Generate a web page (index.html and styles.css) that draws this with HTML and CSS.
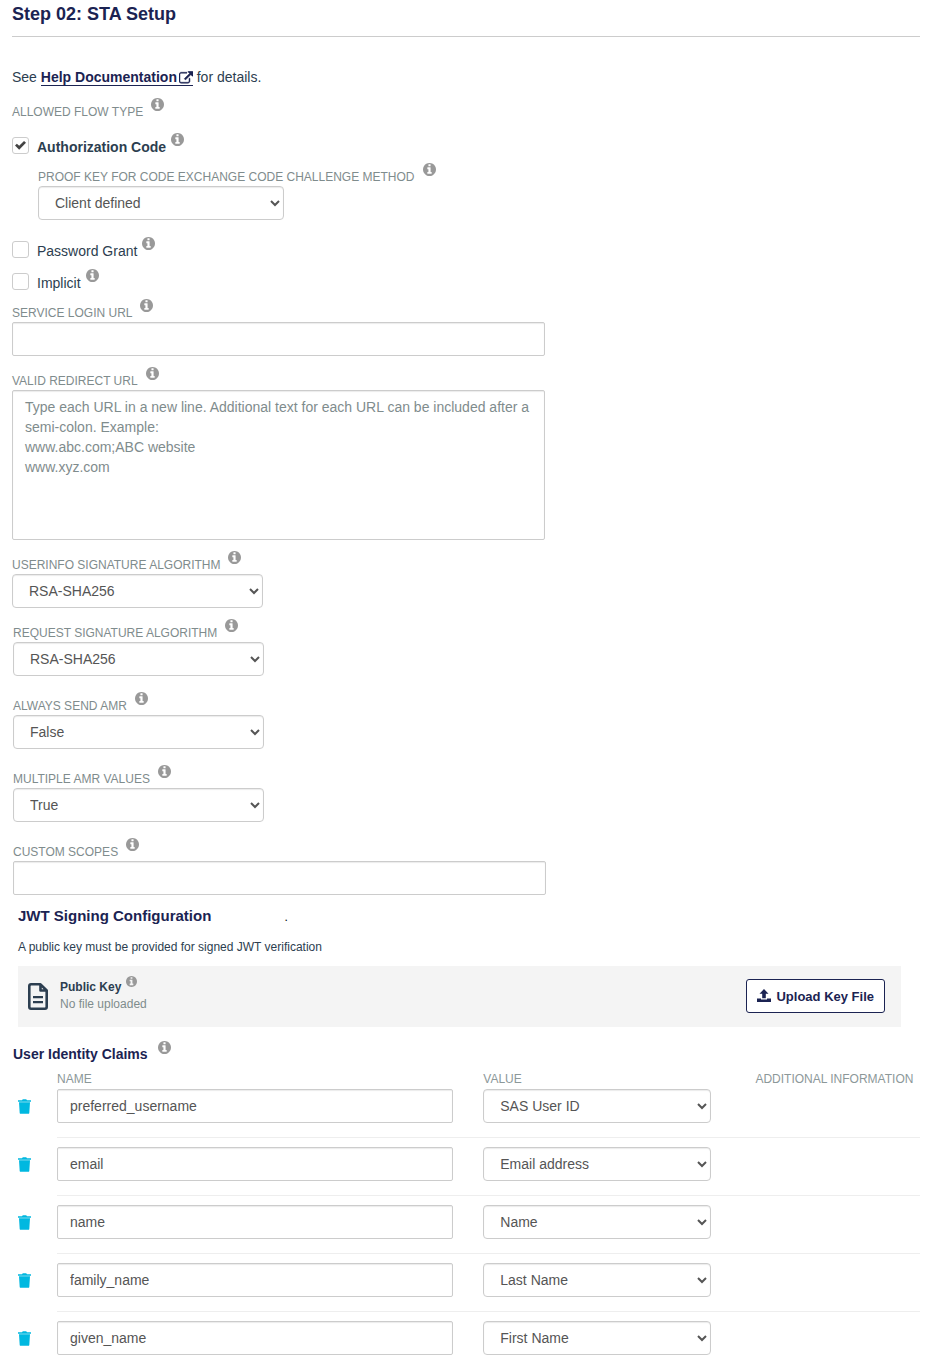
FILE: index.html
```html
<!DOCTYPE html>
<html lang="en">
<head>
    <meta charset="UTF-8">
    <meta name="viewport" content="width=device-width, initial-scale=1.0">
    <title>STA Setup</title>
    <link rel="stylesheet" href="styles.css">
</head>
<body>
    <svg class="sprite" aria-hidden="true">
        <symbol id="icon-info" viewBox="0 128 1536 1536">
            <path fill-rule="evenodd" d="M1024 1376v-160q0-14-9-23t-23-9h-96v-512q0-14-9-23t-23-9h-320q-14 0-23 9t-9 23v160q0 14 9 23t23 9h96v320h-96q-14 0-23 9t-9 23v160q0 14 9 23t23 9h448q14 0 23-9t9-23zM896 480v-160q0-14-9-23t-23-9h-192q-14 0-23 9t-9 23v160q0 14 9 23t23 9h192q14 0 23-9t9-23zM1536 896q0-209-103-385.5t-279.5-279.5t-385.5-103t-385.5 103t-279.5 279.5t-103 385.5t103 385.5t279.5 279.5t385.5 103t385.5-103t279.5-279.5t103-385.5z"/>
        </symbol>
        <symbol id="icon-trash" viewBox="0 0 13 15">
            <path d="M0 1.2h4L4.8.3h3.4l.8.9h4v1.5H0zM1 3.2h11l-.7 10.7q-.1.9-1 .9H2.7q-.9 0-1-.9z"/>
        </symbol>
    </svg>

    <form class="setup">
        <h1>Step 02: STA Setup</h1>
        <p class="help">See <a href="#">Help Documentation <svg class="external" viewBox="0 0 1792 1600" aria-hidden="true"><path d="M1408 928v320q0 119-84.5 203.5t-203.5 84.5h-832q-119 0-203.5-84.5t-84.5-203.5v-832q0-119 84.5-203.5t203.5-84.5h704q14 0 23 9t9 23v64q0 14-9 23t-23 9h-704q-66 0-113 47t-47 113v832q0 66 47 113t113 47h832q66 0 113-47t47-113v-320q0-14 9-23t23-9h64q14 0 23 9t9 23zm384-864v512q0 26-19 45t-45 19-45-19l-176-176-652 652q-10 10-23 10t-23-10l-114-114q-10-10-10-23t10-23l652-652-176-176q-19-19-19-45t19-45 45-19h512q26 0 45 19t19 45z"/></svg></a> for details.</p>

        <fieldset class="flows">
            <legend class="label">ALLOWED FLOW TYPE <svg class="info"><use href="#icon-info"/></svg></legend>
            <div class="check">
                <input type="checkbox" id="flow_code" checked>
                <label for="flow_code"><b>Authorization Code</b></label>
                <svg class="info"><use href="#icon-info"/></svg>
            </div>
            <div class="nested">
                <label class="label" for="pkce">PROOF KEY FOR CODE EXCHANGE CODE CHALLENGE METHOD <svg class="info"><use href="#icon-info"/></svg></label>
                <select class="control" id="pkce">
                    <option>Client defined</option>
                </select>
            </div>
            <div class="check">
                <input type="checkbox" id="flow_password">
                <label for="flow_password">Password Grant</label>
                <svg class="info"><use href="#icon-info"/></svg>
            </div>
            <div class="check">
                <input type="checkbox" id="flow_implicit">
                <label for="flow_implicit">Implicit</label>
                <svg class="info"><use href="#icon-info"/></svg>
            </div>
        </fieldset>

        <div class="urls">
            <div class="field">
                <label class="label" for="login_url">SERVICE LOGIN URL <svg class="info"><use href="#icon-info"/></svg></label>
                <input class="control" type="text" id="login_url">
            </div>
            <div class="field">
                <label class="label" for="redirect_url">VALID REDIRECT URL <svg class="info"><use href="#icon-info"/></svg></label>
                <textarea class="control" id="redirect_url" placeholder="Type each URL in a new line. Additional text for each URL can be included after a semi-colon. Example:&#10;www.abc.com;ABC website&#10;www.xyz.com"></textarea>
            </div>
            <div class="field">
                <label class="label" for="userinfo_alg">USERINFO SIGNATURE ALGORITHM <svg class="info"><use href="#icon-info"/></svg></label>
                <select class="control" id="userinfo_alg">
                    <option>RSA-SHA256</option>
                </select>
            </div>
        </div>

        <div class="options">
            <div class="field">
                <label class="label" for="request_alg">REQUEST SIGNATURE ALGORITHM <svg class="info"><use href="#icon-info"/></svg></label>
                <select class="control" id="request_alg">
                    <option>RSA-SHA256</option>
                </select>
            </div>
            <div class="field">
                <label class="label" for="send_amr">ALWAYS SEND AMR <svg class="info"><use href="#icon-info"/></svg></label>
                <select class="control" id="send_amr">
                    <option>False</option>
                    <option>True</option>
                </select>
            </div>
            <div class="field">
                <label class="label" for="multi_amr">MULTIPLE AMR VALUES <svg class="info"><use href="#icon-info"/></svg></label>
                <select class="control" id="multi_amr">
                    <option>True</option>
                    <option>False</option>
                </select>
            </div>
            <div class="field">
                <label class="label" for="scopes">CUSTOM SCOPES <svg class="info"><use href="#icon-info"/></svg></label>
                <input class="control" type="text" id="scopes">
            </div>
        </div>

        <section class="jwt">
            <h2>JWT Signing Configuration <span class="dot">.</span></h2>
            <p>A public key must be provided for signed JWT verification</p>
            <div class="key-panel">
                <svg class="file" viewBox="0 0 20 27" aria-hidden="true">
                    <path fill="none" stroke="currentColor" stroke-width="2.6" stroke-linejoin="round" d="M3 1.3h9.5l6.2 6.2V24q0 1.7-1.7 1.7H3q-1.7 0-1.7-1.7V3Q1.3 1.3 3 1.3zM12.5 1.3V7.5h6.2"/>
                    <path d="M5 13h10v2.300H5zM5 18h10v2.300H5z" fill="currentColor"/>
                </svg>
                <div class="key-text">
                    <div class="key-name">Public Key <svg class="info"><use href="#icon-info"/></svg></div>
                    <div class="key-status">No file uploaded</div>
                </div>
                <button type="button" class="upload">
                    <svg viewBox="0 0 14 14" aria-hidden="true"><path d="M7 0l4.500 4.700H8.800v4.600H5.200V4.700H2.500zM0 9.500h4v1h6v-1h4V13H0z"/></svg>
                    Upload Key File
                </button>
            </div>
        </section>

        <section class="claims">
            <h3>User Identity Claims <svg class="info"><use href="#icon-info"/></svg></h3>
            <table>
                <thead>
                    <tr>
                        <td class="col-delete"></td>
                        <th class="col-name" id="th_name">NAME</th>
                        <th class="col-value" id="th_value">VALUE</th>
                        <th class="col-extra">ADDITIONAL INFORMATION</th>
                    </tr>
                </thead>
                <tbody>
                    <tr>
                        <td><button type="button" class="delete" aria-label="Delete"><svg><use href="#icon-trash"/></svg></button></td>
                        <td><input class="control" type="text" aria-labelledby="th_name" value="preferred_username"></td>
                        <td><select class="control" aria-labelledby="th_value"><option>SAS User ID</option></select></td>
                        <td></td>
                    </tr>
                    <tr>
                        <td><button type="button" class="delete" aria-label="Delete"><svg><use href="#icon-trash"/></svg></button></td>
                        <td><input class="control" type="text" aria-labelledby="th_name" value="email"></td>
                        <td><select class="control" aria-labelledby="th_value"><option>Email address</option></select></td>
                        <td></td>
                    </tr>
                    <tr>
                        <td><button type="button" class="delete" aria-label="Delete"><svg><use href="#icon-trash"/></svg></button></td>
                        <td><input class="control" type="text" aria-labelledby="th_name" value="name"></td>
                        <td><select class="control" aria-labelledby="th_value"><option>Name</option></select></td>
                        <td></td>
                    </tr>
                    <tr>
                        <td><button type="button" class="delete" aria-label="Delete"><svg><use href="#icon-trash"/></svg></button></td>
                        <td><input class="control" type="text" aria-labelledby="th_name" value="family_name"></td>
                        <td><select class="control" aria-labelledby="th_value"><option>Last Name</option></select></td>
                        <td></td>
                    </tr>
                    <tr>
                        <td><button type="button" class="delete" aria-label="Delete"><svg><use href="#icon-trash"/></svg></button></td>
                        <td><input class="control" type="text" aria-labelledby="th_name" value="given_name"></td>
                        <td><select class="control" aria-labelledby="th_value"><option>First Name</option></select></td>
                        <td></td>
                    </tr>
                </tbody>
            </table>
        </section>
    </form>
</body>
</html>
```
FILE: styles.css
```css
* {
    box-sizing: border-box;
}
body {
    margin: 0;
    font-family: "Liberation Sans", Arial, sans-serif;
    font-size: 14px;
    line-height: 20px;
    color: #2c3e50;
    background-color: #fff;
}
h1, h2, h3, p {
    margin: 0;
}
h1, h2, h3, a {
    color: #1b2352;
}
.sprite {
    display: none;
}
.setup {
    padding: 4px 12px 8px;
}
h1 {
    padding-bottom: 12px;
    border-bottom: 1px solid #ccc;
    font-size: 18px;
    line-height: 20px;
}
.help {
    margin-top: 30px;
}
.help a {
    font-weight: bold;
    text-decoration: none;
    border-bottom: 1px solid #1b2352;
}
.external {
    width: 14px;
    height: 13px;
    margin-left: -2px;
    vertical-align: -2px;
    fill: currentColor;
    stroke: currentColor;
    stroke-width: 60;
}

/* labels */
.label {
    display: flex;
    gap: 8px;
    height: 20px;
    padding: 0;
    font-size: 12px;
    line-height: 22px;
    color: #7f8c8d;
}
.info {
    flex: none;
    width: 13px;
    height: 13px;
    margin-top: -3px;
    fill: #999;
}

/* controls */
.control {
    display: block;
    width: 100%;
    height: 34px;
    margin: 0;
    padding: 6px 12px;
    border: 1px solid #ccc;
    border-radius: 2px;
    font: inherit;
    color: #555;
    background-color: #fff;
    box-shadow: inset 0 1px 1px rgba(0,0,0,0.08);
}
select.control {
    max-width: 251px;
    border-radius: 4px;
}
textarea.control {
    height: 150px;
    resize: none;
}
.control::placeholder {
    color: #7f8c8d;
}

/* flow types */
.flows {
    margin: 14px 0 0;
    padding: 0;
    border: 0;
}
.check {
    display: flex;
    margin-top: 12px;
}
.check input {
    appearance: none;
    width: 17px;
    height: 17px;
    margin: 0 8px 0 0;
    border: 1px solid #ccc;
    border-radius: 3px;
}
.check input:checked::before {
    content: "";
    display: block;
    width: 11px;
    height: 9px;
    margin: 3px 2px;
    background-color: #444;
    clip-path: polygon(0 50%, 17% 31%, 38% 54%, 82% 0, 100% 19%, 38% 96%);
}
.check .info {
    margin-top: -4px;
    margin-left: 5px;
}
.flows legend + .check {
    margin-top: 16px;
}
.nested {
    margin: 9px 0 21px 26px;
}
.nested .control {
    max-width: 246px;
}

/* fields */
.urls,
.options {
    display: flex;
    flex-direction: column;
    max-width: 533px;
}
.urls {
    gap: 14px;
    margin-top: 9px;
}
.options {
    gap: 19px;
    margin-top: 14px;
    margin-left: 1px;
}

/* jwt */
.jwt {
    margin: 11px 19px 0 6px;
}
h2 {
    font-size: 15px;
    line-height: 20px;
}
.dot {
    margin-left: 69px;
    font-size: 12px;
    font-weight: normal;
    color: #000;
}
.jwt p {
    margin: 10px 0 9px;
    font-size: 12px;
}
.key-panel {
    display: flex;
    align-items: center;
    gap: 12px;
    padding: 13px 16px 14px 10px;
    background-color: #f4f4f4;
}
.file {
    width: 20px;
    height: 27px;
}
.key-text {
    flex: 1;
    font-size: 12px;
    line-height: 17px;
}
.key-name {
    display: flex;
    gap: 5px;
    font-weight: bold;
}
.key-name .info {
    width: 11px;
    height: 11px;
}
.key-status {
    color: #7f8c8d;
}
.upload {
    display: flex;
    align-items: center;
    gap: 5px;
    height: 34px;
    padding: 0 10px;
    border: 1px solid #1b2352;
    border-radius: 3px;
    font: bold 13px "Liberation Sans", Arial, sans-serif;
    color: #1b2352;
    background-color: #fff;
}
.upload svg {
    width: 14px;
    height: 14px;
    fill: currentColor;
}

/* claims */
.claims {
    margin-top: 17px;
    margin-left: 1px;
}
h3 {
    display: flex;
    gap: 10px;
    font-size: 14px;
    line-height: 20px;
}
table {
    width: 100%;
    margin-top: 5px;
    border-spacing: 0;
    table-layout: fixed;
}
th {
    padding: 0;
    font-size: 12px;
    font-weight: normal;
    text-align: left;
    color: #8c9899;
    white-space: nowrap;
}
.col-delete {
    width: 44px;
}
.col-name {
    width: 47%;
}
.col-value {
    width: 30%;
}
tbody td {
    padding: 9px 0 14px;
}
tbody tr:first-child td {
    padding-top: 0;
}
tbody td + td {
    padding-right: 30px;
    border-bottom: 1px solid #eee;
}
tbody td:nth-child(3) {
    padding-right: 44px;
}
tbody tr:last-child td {
    padding-bottom: 0;
    border-bottom: 0;
}
.delete {
    display: block;
    margin-left: 5px;
    padding: 0;
    border: 0;
    background: none;
    cursor: pointer;
}
.delete svg {
    display: block;
    width: 13px;
    height: 15px;
    fill: #00b8e0;
}
```
